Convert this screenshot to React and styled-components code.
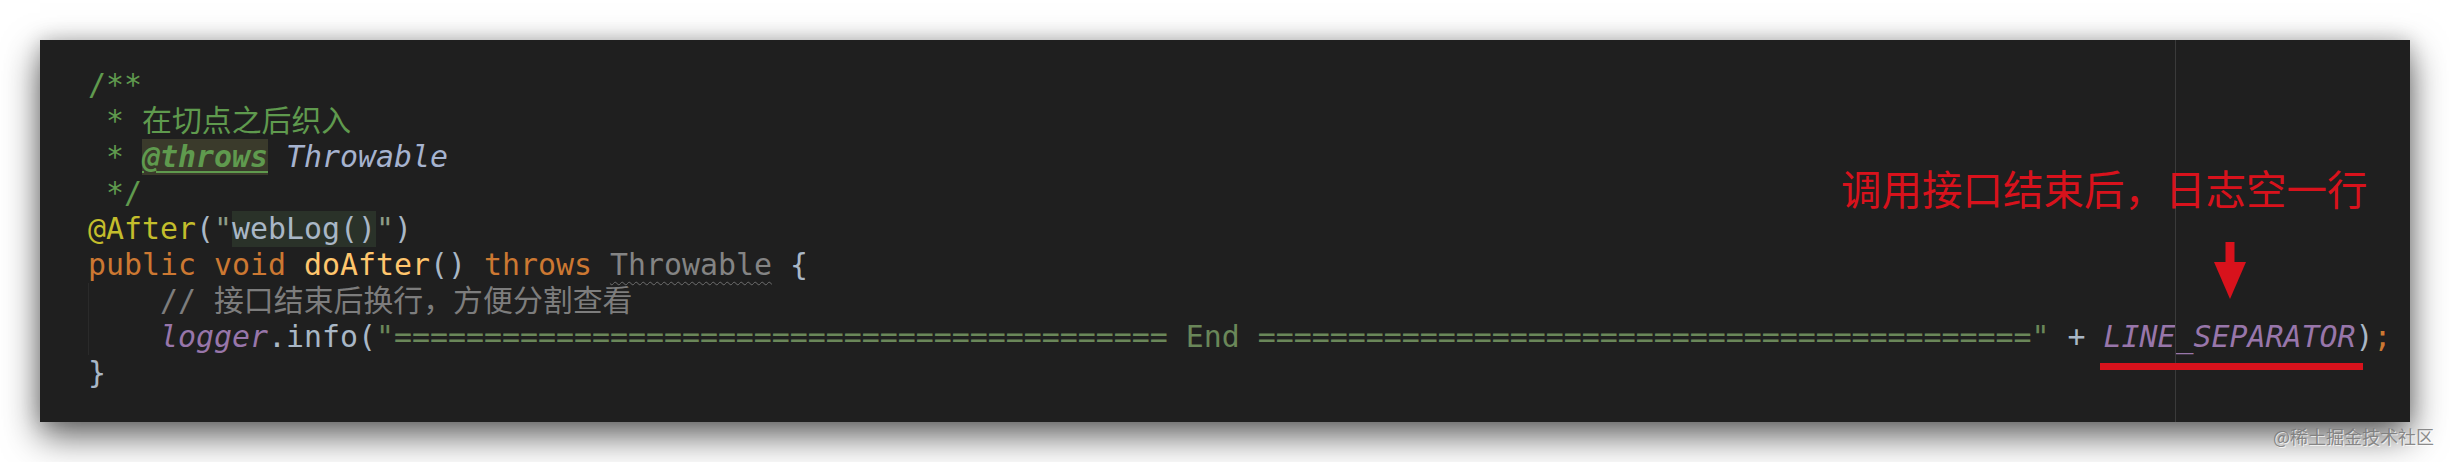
import React from 'react';
import styled, { createGlobalStyle } from 'styled-components';

const GlobalStyle = createGlobalStyle`
  html, body {
    margin: 0;
    padding: 0;
    background: #ffffff;
  }
`;

const Page = styled.div`
  position: relative;
  width: 2450px;
  height: 462px;
  padding: 40px 40px 40px 40px;
  box-sizing: border-box;
  background: #ffffff;
  overflow: hidden;
`;

const Editor = styled.div`
  position: relative;
  width: 2370px;
  height: 382px;
  box-sizing: border-box;
  padding: 27px 48px;
  background: #1f1f1f;
  box-shadow: 0 14px 34px rgba(0, 0, 0, 0.62), 0 0 18px rgba(0, 0, 0, 0.16);
  font-family: 'DejaVu Sans Mono', 'Noto Sans CJK SC', monospace;
  font-size: 29.9px;
  color: #a9b7c6;
`;

const Line = styled.div`
  height: 36px;
  line-height: 36px;
  white-space: pre;
`;

const Block = styled.div`
  box-shadow: inset 1px 0 #2a2a2a;
`;

const MarginGuide = styled.div`
  position: absolute;
  top: 0;
  bottom: 0;
  left: 2135px;
  width: 1px;
  background: #3a3a3a;
`;

const Doc = styled.span`
  color: #5f9a4e;
`;

const DocTag = styled.span`
  color: #5f9a4e;
  font-weight: bold;
  font-style: italic;
  text-decoration: underline;
  text-underline-offset: 4px;
  background: #3a3a2b;
  display: inline-block;
  height: 36px;
`;

const DocRef = styled.span`
  color: #a6b3cf;
  font-style: italic;
`;

const Annotation = styled.span`
  color: #c3bd2c;
`;

const Keyword = styled.span`
  color: #cc7832;
`;

const Method = styled.span`
  color: #ffc66d;
`;

const Quote = styled.span`
  color: #8d9c86;
`;

const Injected = styled.span`
  background: #2a3229;
  display: inline-block;
  height: 36px;
`;

const WeakType = styled.span`
  color: #848484;
  text-decoration: underline wavy #6e6e6e;
  text-decoration-thickness: 1px;
  text-underline-offset: 6px;
`;

const Comment = styled.span`
  color: #7d7d7d;
`;

const Field = styled.span`
  color: #9876aa;
  font-style: italic;
`;

const Str = styled.span`
  color: #6a8759;
`;

const Note = styled.div`
  position: absolute;
  left: 1841px;
  top: 168px;
  font-family: 'Noto Sans CJK SC', sans-serif;
  font-size: 40.5px;
  line-height: 40px;
  color: #d8121c;
  white-space: nowrap;
`;

const Arrow = styled.svg`
  position: absolute;
  left: 2210px;
  top: 242px;
`;

const Underline = styled.div`
  position: absolute;
  left: 2100px;
  top: 363px;
  width: 263px;
  height: 7px;
  background: #d8121c;
`;

const Watermark = styled.div`
  position: absolute;
  right: 16px;
  top: 424px;
  font-family: 'Noto Sans CJK SC', sans-serif;
  font-size: 18px;
  line-height: 24px;
  color: rgba(120, 120, 120, 0.85);
  text-shadow: 1px 1px 0 rgba(255, 255, 255, 0.7);
  white-space: nowrap;
`;

const bar = '='.repeat(43);

const App = () => {
  return (
    <Page>
      <GlobalStyle />
      <Editor>
        <MarginGuide />
        <Line><Doc>/**</Doc></Line>
        <Line><Doc> * 在切点之后织入</Doc></Line>
        <Line>
          <Doc> * </Doc><DocTag>@throws</DocTag> <DocRef>Throwable</DocRef>
        </Line>
        <Line><Doc> */</Doc></Line>
        <Line>
          <Annotation>@After</Annotation>(<Quote>"</Quote><Injected>webLog()</Injected><Quote>"</Quote>)
        </Line>
        <Line>
          <Keyword>public void </Keyword><Method>doAfter</Method>() <Keyword>throws </Keyword>
          <WeakType>Throwable</WeakType> {'{'}
        </Line>
        <Block>
          <Line><Comment>    // 接口结束后换行，方便分割查看</Comment></Line>
          <Line>
            {'    '}<Field>logger</Field>.info(<Str>"{bar} End {bar}"</Str> + <Field>LINE_SEPARATOR</Field>)<Keyword>;</Keyword>
          </Line>
        </Block>
        <Line>{'}'}</Line>
      </Editor>

      <Note>调用接口结束后，日志空一行</Note>
      <Arrow width="40" height="58" viewBox="0 0 40 58">
        <rect x="15.5" y="0" width="9" height="22" fill="#d8121c" />
        <polygon points="4,20 36,20 20,57" fill="#d8121c" />
      </Arrow>
      <Underline />
      <Watermark>@稀土掘金技术社区</Watermark>
    </Page>
  );
};

export default App;
